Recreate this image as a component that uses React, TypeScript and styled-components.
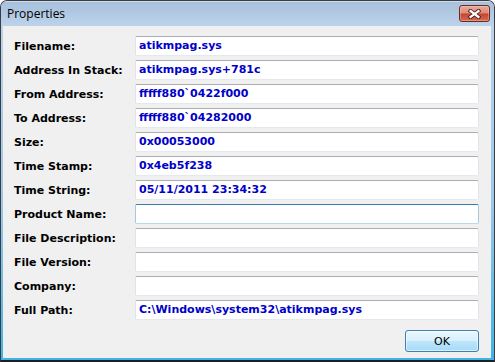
import styled, { createGlobalStyle } from "styled-components";

const GlobalStyle = createGlobalStyle`
  html, body {
    margin: 0;
    padding: 0;
    background: #ffffff;
  }
`;

type Prop = {
  label: string;
  value: string;
  focused?: boolean;
};

const rows: Prop[] = [
  { label: "Filename:", value: "atikmpag.sys" },
  { label: "Address In Stack:", value: "atikmpag.sys+781c" },
  { label: "From Address:", value: "fffff880`0422f000" },
  { label: "To Address:", value: "fffff880`04282000" },
  { label: "Size:", value: "0x00053000" },
  { label: "Time Stamp:", value: "0x4eb5f238" },
  { label: "Time String:", value: "05/11/2011 23:34:32" },
  { label: "Product Name:", value: "", focused: true },
  { label: "File Description:", value: "" },
  { label: "File Version:", value: "" },
  { label: "Company:", value: "" },
  { label: "Full Path:", value: "C:\\Windows\\system32\\atikmpag.sys" },
];

/**
 * The Properties dialog
 * @returns The dialog window
 */
export default function App() {
  return (
    <>
      <GlobalStyle />
      <Window>
        <TitleBar>
          <Title>Properties</Title>
          <CloseButton aria-label="Close">
            <svg width="13" height="10" viewBox="0 0 13 10">
              <path
                d="M2.5 2 L10.5 8 M10.5 2 L2.5 8"
                stroke="#4a1a12"
                strokeWidth="4"
                strokeLinecap="square"
                fill="none"
              />
              <path
                d="M2.5 2 L10.5 8 M10.5 2 L2.5 8"
                stroke="#ffffff"
                strokeWidth="2.2"
                strokeLinecap="square"
                fill="none"
              />
            </svg>
          </CloseButton>
        </TitleBar>
        <FrameBody>
          <Client>
            <PropGrid>
              {rows.map((row) => (
                <Row key={row.label}>
                  <Label>{row.label}</Label>
                  <Field $focused={row.focused}>{row.value}</Field>
                </Row>
              ))}
            </PropGrid>
            <Footer>
              <OkButton>OK</OkButton>
            </Footer>
          </Client>
        </FrameBody>
      </Window>
    </>
  );
}

const Window = styled.div`
  box-sizing: border-box;
  width: 495px;
  height: 362px;
  display: flex;
  flex-direction: column;
  border: 1px solid #3a3d42;
  border-bottom-width: 2px;
  border-bottom-color: #1c1f24;
  border-radius: 7px 7px 0 0;
  overflow: hidden;
  background: linear-gradient(
    to bottom,
    #a5bedb 0px,
    #bad2ea 26px,
    #9cc8ea 55%,
    #3db4e6 100%
  );
`;

const TitleBar = styled.div`
  height: 25px;
  flex-shrink: 0;
  display: flex;
  align-items: flex-start;
  justify-content: space-between;
  padding: 0 4px 0 6px;
  background: linear-gradient(to bottom, #a6bfdb, #bcd3ea);
  box-shadow: inset 0 1px 0 rgba(255, 255, 255, 0.45);
`;

const Title = styled.span`
  font-family: "Open Sans", "Noto Sans", sans-serif;
  font-size: 12px;
  line-height: 26px;
  color: #000000;
`;

const CloseButton = styled.div`
  box-sizing: border-box;
  margin-top: 4px;
  width: 31px;
  height: 17px;
  display: flex;
  align-items: center;
  justify-content: center;
  border: 1px solid #6b2a22;
  border-radius: 3px;
  background: linear-gradient(
    to bottom,
    #e9a99b 0%,
    #dc8b78 45%,
    #c7452f 55%,
    #d36c55 100%
  );
  box-shadow: inset 0 0 0 1px rgba(255, 220, 210, 0.35);
`;

const FrameBody = styled.div`
  flex: 1;
  display: flex;
  padding: 0 3px 2px 2px;
`;

const Client = styled.div`
  flex: 1;
  display: flex;
  flex-direction: column;
  background: #f0f0f0;
  padding: 10px 12px 6px 11px;
`;

const PropGrid = styled.div`
  display: flex;
  flex-direction: column;
  gap: 4px;
`;

const Row = styled.div`
  display: grid;
  grid-template-columns: 121px 1fr;
  align-items: center;
  height: 20px;
`;

const Label = styled.span`
  font-family: "DejaVu Sans", "Liberation Sans", sans-serif;
  font-weight: bold;
  font-size: 11px;
  color: #000000;
  white-space: nowrap;
`;

const Field = styled.div<{ $focused?: boolean }>`
  box-sizing: border-box;
  height: 20px;
  padding: 0 3px;
  border: 1px solid ${(p) => (p.$focused ? "#a4c9e3" : "#e2e3ea")};
  border-top-color: ${(p) => (p.$focused ? "#3d7bad" : "#abadb3")};
  border-bottom-color: ${(p) => (p.$focused ? "#b7d9ed" : "#e3e9ef")};
  border-radius: 2px;
  background: #ffffff;
  font-family: "DejaVu Sans", "Liberation Sans", sans-serif;
  font-weight: bold;
  font-size: 11px;
  line-height: 18px;
  color: #0000c8;
  white-space: nowrap;
  overflow: hidden;
`;

const Footer = styled.div`
  display: flex;
  justify-content: flex-end;
  margin-top: 10px;
`;

const OkButton = styled.div`
  box-sizing: border-box;
  width: 74px;
  height: 22px;
  display: flex;
  align-items: center;
  justify-content: center;
  border: 1px solid #3c7fb1;
  border-radius: 3px;
  background: linear-gradient(
    to bottom,
    #eaf6fd 0%,
    #d9f0fc 50%,
    #bee6fd 51%,
    #a7d9f5 100%
  );
  box-shadow: inset 0 0 0 1px rgba(255, 255, 255, 0.6);
  font-family: "DejaVu Sans", "Liberation Sans", sans-serif;
  font-size: 11px;
  color: #000000;
`;
